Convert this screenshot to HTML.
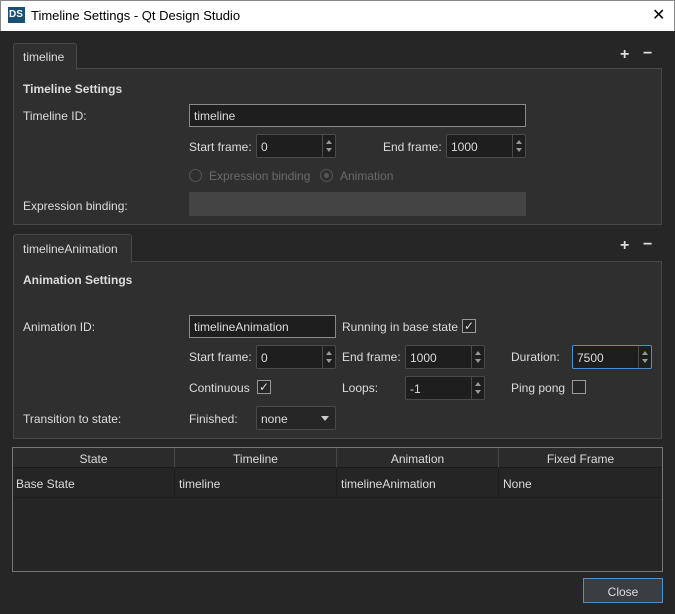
<!DOCTYPE html><html><head><style>
*{box-sizing:border-box;margin:0;padding:0}
body{width:675px;height:614px;background:#262626;font-family:"Liberation Sans",sans-serif;font-size:12px;color:#dcdcdc;position:relative;overflow:hidden}
.a{position:absolute;white-space:nowrap}
.title{left:0;top:0;width:675px;height:31px;background:#fff;color:#000;border:1px solid #888;border-bottom:none}
.panel{background:#2f2f2f;border:1px solid #484848}
.tab{background:#2f2f2f;border:1px solid #484848;border-bottom:none;border-radius:3px 3px 0 0;padding:6px 0 0 9px}
.inp{background:#1e1e1e;border:1px solid #4a4a4a;border-radius:2px;padding:5px 0 0 4px;height:24px}
.le{background:#1e1e1e;border:1px solid #8a8a8a;padding:4px 0 0 4px;height:23px}
.spin{position:absolute;right:0;top:0;width:13px;height:100%;border-left:1px solid #4a4a4a}
.spin:before{content:"";position:absolute;left:3px;top:5px;border:3px solid transparent;border-bottom:4px solid #999;border-top:none}
.spin:after{content:"";position:absolute;left:3px;bottom:5px;border:3px solid transparent;border-top:4px solid #999;border-bottom:none}
.cb{width:14px;height:14px;border:1px solid #999;background:#262626;color:#ddd;font-size:12px;line-height:12px;text-align:center}
.b{font-weight:bold}
.pm{color:#ddd;font-size:16px;font-weight:bold}
.th{background:#2b2b2b;border-right:1px solid #484848;border-bottom:1px solid #1a1a1a;text-align:center;height:20px;padding-top:4px}
</style></head><body>
<div class="a title"></div>
<div class="a" style="left:8px;top:7px;width:17px;height:16px;background:#1b4f72;color:#fff;font-size:10px;font-weight:bold;padding:2px 0 0 1px">DS</div>
<div class="a" style="left:31px;top:8px;color:#000;font-size:13px">Timeline Settings - Qt Design Studio</div>
<div class="a" style="left:652px;top:5px;color:#000;font-size:16px">✕</div>

<div class="a panel" style="left:13px;top:68px;width:649px;height:157px"></div>
<div class="a tab" style="left:13px;top:43px;width:64px;height:27px">timeline</div>
<div class="a pm" style="left:620px;top:46px">+</div><div class="a pm" style="left:643px;top:45px">−</div>
<div class="a b" style="left:23px;top:82px">Timeline Settings</div>
<div class="a" style="left:23px;top:109px">Timeline ID:</div>
<div class="a le" style="left:189px;top:104px;width:337px">timeline</div>
<div class="a" style="left:189px;top:140px">Start frame:</div>
<div class="a inp" style="left:256px;top:134px;width:80px">0<div class="spin"></div></div>
<div class="a" style="left:383px;top:140px">End frame:</div>
<div class="a inp" style="left:446px;top:134px;width:80px">1000<div class="spin"></div></div>
<div class="a" style="left:189px;top:169px;width:13px;height:13px;border:1px solid #555;border-radius:50%"></div>
<div class="a" style="left:209px;top:169px;color:#6a6a6a">Expression binding</div>
<div class="a" style="left:320px;top:169px;width:13px;height:13px;border:1px solid #555;border-radius:50%"><div style="margin:3px;width:5px;height:5px;border-radius:50%;background:#555"></div></div>
<div class="a" style="left:340px;top:169px;color:#6a6a6a">Animation</div>
<div class="a" style="left:23px;top:199px">Expression binding:</div>
<div class="a" style="left:189px;top:192px;width:337px;height:24px;background:#444"></div>

<div class="a panel" style="left:13px;top:261px;width:649px;height:178px"></div>
<div class="a tab" style="left:13px;top:234px;width:119px;height:29px;padding-top:7px">timelineAnimation</div>
<div class="a pm" style="left:620px;top:237px">+</div><div class="a pm" style="left:643px;top:236px">−</div>
<div class="a b" style="left:23px;top:273px">Animation Settings</div>
<div class="a" style="left:23px;top:320px">Animation ID:</div>
<div class="a le" style="left:189px;top:315px;width:147px">timelineAnimation</div>
<div class="a" style="left:342px;top:320px">Running in base state</div>
<div class="a cb" style="left:462px;top:319px">✓</div>
<div class="a" style="left:189px;top:350px">Start frame:</div>
<div class="a inp" style="left:256px;top:345px;width:80px">0<div class="spin"></div></div>
<div class="a" style="left:342px;top:350px">End frame:</div>
<div class="a inp" style="left:405px;top:345px;width:80px">1000<div class="spin"></div></div>
<div class="a" style="left:511px;top:350px">Duration:</div>
<div class="a inp" style="left:572px;top:345px;width:80px;border-color:#4a90d9">7500<div class="spin"></div></div>
<div class="a" style="left:189px;top:381px">Continuous</div>
<div class="a cb" style="left:257px;top:380px">✓</div>
<div class="a" style="left:342px;top:381px">Loops:</div>
<div class="a inp" style="left:405px;top:376px;width:80px">-1<div class="spin"></div></div>
<div class="a" style="left:511px;top:381px">Ping pong</div>
<div class="a cb" style="left:572px;top:380px"></div>
<div class="a" style="left:23px;top:412px">Transition to state:</div>
<div class="a" style="left:189px;top:412px">Finished:</div>
<div class="a inp" style="left:256px;top:406px;width:80px;background:#262626">none<span style="position:absolute;right:6px;top:9px;border:4px solid transparent;border-top:5px solid #ccc"></span></div>

<div class="a" style="left:12px;top:447px;width:651px;height:125px;border:1px solid #777;background:#252525">
<div style="display:flex">
<div class="th" style="width:162px">State</div><div class="th" style="width:162px">Timeline</div><div class="th" style="width:162px">Animation</div><div class="th" style="width:163px;border-right:none">Fixed Frame</div></div>
<div style="display:flex;height:30px;border-bottom:1px solid #1c1c1c">
<div style="width:162px;padding:9px 0 0 3px;border-right:1px solid #1c1c1c">Base State</div><div style="width:162px;padding:9px 0 0 4px;border-right:1px solid #1c1c1c">timeline</div><div style="width:162px;padding:9px 0 0 4px;border-right:1px solid #1c1c1c">timelineAnimation</div><div style="padding:9px 0 0 4px">None</div></div>
</div>
<div class="a" style="left:583px;top:578px;width:80px;height:25px;border:1px solid #4a90d9;background:#3a3d42;text-align:center;padding-top:6px">Close</div>
</body></html>
